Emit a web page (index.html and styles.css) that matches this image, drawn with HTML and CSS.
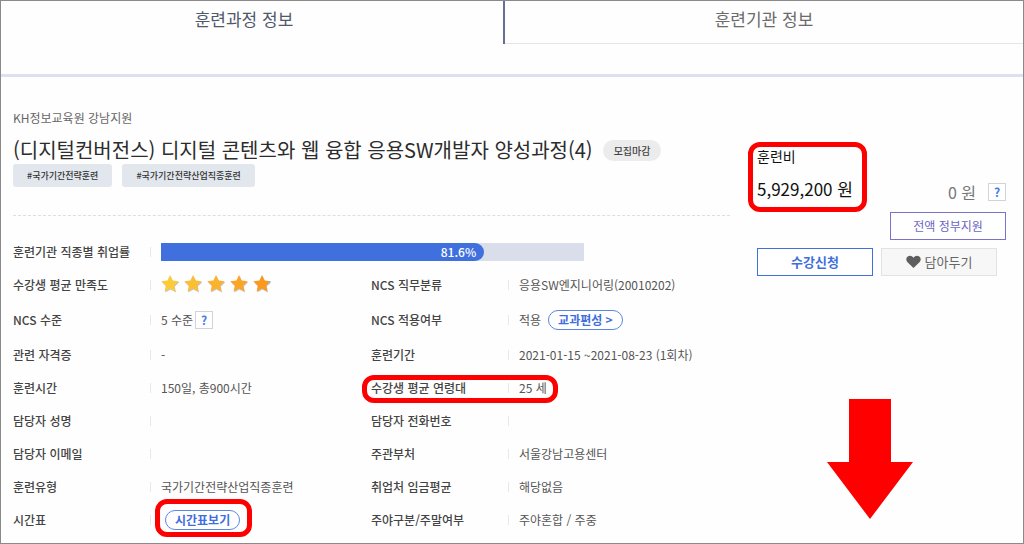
FILE: index.html
```html
<!DOCTYPE html>
<html lang="ko">
<head>
<meta charset="utf-8">
<title>훈련과정 정보</title>
<link rel="stylesheet" href="styles.css">
</head>
<body>
<div class="page">
  <nav class="tabs">
    <a class="tab tab-active" href="#course">훈련과정 정보</a>
    <a class="tab" href="#institute">훈련기관 정보</a>
  </nav>
  <div class="content">
    <main class="course" id="course">
      <p class="institute">KH정보교육원 강남지원</p>
      <div class="title-row">
        <h1 class="title">(디지털컨버전스) 디지털 콘텐츠와 웹 융합 응용SW개발자 양성과정(4)</h1>
        <span class="status">모집마감</span>
      </div>
      <div class="tags">
        <span class="tag">#국가기간전략훈련</span>
        <span class="tag">#국가기간전략산업직종훈련</span>
      </div>
      <table class="info">
        <colgroup><col class="col-label"><col class="col-value"><col class="col-label"><col></colgroup>
        <tr>
          <th scope="row">훈련기관 직종별 취업률</th>
          <td colspan="3"><div class="bar"><div class="bar-fill" style="width:76.4%">81.6%</div></div></td>
        </tr>
        <tr>
          <th scope="row">수강생 평균 만족도</th>
          <td>
            <svg class="stars" viewBox="0 0 112 20" role="img" aria-label="별점">
              <defs>
                <path id="star" d="M9 1 L11.6 6.6 L17.7 7.3 L13.2 11.5 L14.4 17.5 L9 14.5 L3.6 17.5 L4.8 11.5 L.3 7.3 L6.4 6.6 Z"/>
              </defs>
              <g fill="#c4c4c4"><use href="#star" x="0.6" y="1"/><use href="#star" x="23.6" y="1"/><use href="#star" x="46.6" y="1"/><use href="#star" x="69.6" y="1"/><use href="#star" x="92.6" y="1"/></g>
              <use href="#star" fill="#fdcb38"/>
              <use href="#star" x="23" fill="#fcbf32"/>
              <use href="#star" x="46" fill="#fbb22c"/>
              <use href="#star" x="69" fill="#faa526"/>
              <use href="#star" x="92" fill="#fa991e"/>
              <path fill="#a9a9a9" d="M107 7 L109.7 7.3 L107 9.8 Z"/>
            </svg>
          </td>
          <th scope="row">NCS 직무분류</th>
          <td>응용SW엔지니어링(20010202)</td>
        </tr>
        <tr class="tall">
          <th scope="row">NCS 수준</th>
          <td><div class="inline-row">5 수준 <button class="help" type="button" aria-label="NCS 수준 도움말">?</button></div></td>
          <th scope="row">NCS 적용여부</th>
          <td><div class="inline-row wide">적용 <button class="pill" type="button">교과편성 &gt;</button></div></td>
        </tr>
        <tr>
          <th scope="row">관련 자격증</th><td>-</td>
          <th scope="row">훈련기간</th><td>2021-01-15 ~2021-08-23 (1회차)</td>
        </tr>
        <tr>
          <th scope="row">훈련시간</th><td>150일, 총900시간</td>
          <th scope="row" class="mark mark-age">수강생 평균 연령대</th><td>25 세</td>
        </tr>
        <tr>
          <th scope="row">담당자 성명</th><td></td>
          <th scope="row">담당자 전화번호</th><td></td>
        </tr>
        <tr>
          <th scope="row">담당자 이메일</th><td></td>
          <th scope="row">주관부처</th><td>서울강남고용센터</td>
        </tr>
        <tr>
          <th scope="row">훈련유형</th><td>국가기간전략산업직종훈련</td>
          <th scope="row">취업처 임금평균</th><td>해당없음</td>
        </tr>
        <tr>
          <th scope="row">시간표</th>
          <td><div class="timetable"><span class="mark mark-time"><button class="pill" type="button">시간표보기</button></span></div></td>
          <th scope="row">주야구분/주말여부</th><td>주야혼합 / 주중</td>
        </tr>
      </table>
    </main>
    <aside class="cost">
      <div class="cost-row">
        <div class="fee mark mark-fee">
          <p class="fee-label">훈련비</p>
          <p class="fee-value">5,929,200 원</p>
        </div>
        <div class="own">
          <span>0 원</span>
          <button class="help" type="button" aria-label="자부담 도움말">?</button>
        </div>
      </div>
      <button class="btn btn-support" type="button">전액 정부지원</button>
      <div class="actions">
        <button class="btn btn-apply" type="button">수강신청</button>
        <button class="btn btn-keep" type="button">
          <svg class="heart" viewBox="0 0 16 14" aria-hidden="true"><path d="M8 13.5 L1.4 7 C-.3 5 .1 2.2 1.9 1 C3.9 -.4 6.6 .2 8 2.4 C9.4 .2 12.1 -.4 14.1 1 C15.9 2.2 16.3 5 14.6 7 Z"/></svg>
          담아두기
        </button>
      </div>
      <svg class="arrow" viewBox="0 0 86 120" aria-hidden="true"><path d="M22 0 H64 V63 H86 L43 120 L0 63 H22 Z"/></svg>
    </aside>
  </div>
</div>
</body>
</html>
```
FILE: styles.css
```css
* { box-sizing: border-box; }

body {
  margin: 0;
  background: #fff;
  color: #555;
  font: 12px/20px "Noto Sans CJK KR", sans-serif;
}

p, h1 { margin: 0; }

button {
  font: inherit;
  padding: 0;
  cursor: pointer;
}

.page {
  min-height: 100vh;
  border: 1px solid #8a8a8a;
  background: #fefefe;
}

/* tabs */
.tabs {
  display: flex;
  height: 76px;
  border-bottom: 3px solid #dce1ec;
}

.tab {
  flex: 1;
  height: 43px;
  border-bottom: 1px solid #e4e6e8;
  color: #6b6b6b;
  font-size: 17px;
  line-height: 36px;
  text-align: center;
  text-decoration: none;
}

.tab-active {
  flex: 0 0 504px;
  padding-right: 16px;
  border-bottom: 0;
  border-right: 2px solid #646f92;
  color: #50586b;
}

.content {
  display: flex;
  gap: 27px;
  padding: 31px 17px 6px 12px;
}

/* course heading */
.course {
  flex: 1;
  min-width: 0;
}

.institute { color: #666; }

.title-row {
  display: flex;
  align-items: center;
  gap: 10px;
  margin-top: 8px;
}

.title {
  color: #2c2c2c;
  font-size: 20px;
  font-weight: 400;
  line-height: 28px;
  white-space: nowrap;
}

.status {
  padding: 0 11px;
  border-radius: 11px;
  background: #ececec;
  color: #444;
  font-size: 10px;
  font-weight: 500;
  line-height: 21px;
  white-space: nowrap;
}

.tags {
  display: flex;
  gap: 10px;
  padding-bottom: 28px;
  border-bottom: 1px dashed #dedede;
}

.tag {
  padding: 0 14px;
  border-radius: 3px;
  background: #e2e7ee;
  color: #333;
  font-size: 9px;
  font-weight: 500;
  line-height: 23px;
}

/* course details */
.info {
  width: 100%;
  margin-top: 19px;
  border-collapse: collapse;
  table-layout: fixed;
}

.col-label { width: 137px; }
.col-value { width: 221px; }

.info tr { height: 33px; }
.info .tall { height: 37px; }

.info th,
.info td {
  padding: 0;
  text-align: left;
  vertical-align: middle;
  white-space: nowrap;
}

.info th {
  color: #444;
  font-weight: 500;
}

.info td {
  padding-left: 11px;
  background: linear-gradient(#e3eaec, #e3eaec) 0 50% / 1px 10px no-repeat;
}

.bar {
  max-width: 423px;
  height: 18px;
  background: #d9deea;
}

.bar-fill {
  height: 18px;
  padding-right: 8px;
  border-radius: 0 9px 9px 0;
  background: #4070de;
  color: #fff;
  font-weight: 500;
  line-height: 18px;
  text-align: right;
}

.stars {
  display: block;
  width: 112px;
  height: 20px;
  margin-bottom: 2px;
}

.inline-row {
  display: flex;
  align-items: center;
  gap: 2px;
}

.inline-row.wide { gap: 7px; }

.timetable {
  display: flex;
  padding-left: 4px;
}

.help {
  width: 18px;
  height: 18px;
  border: 1px solid #cfd3da;
  background: #fff;
  color: #4a7be6;
  font-weight: 700;
  line-height: 16px;
}

.pill {
  display: block;
  padding: 0 9px;
  border: 1px solid #5c86e4;
  border-radius: 10px;
  background: #fff;
  color: #3f6fdc;
  font-weight: 700;
  line-height: 18px;
}

/* cost panel */
.cost {
  display: flex;
  flex: 0 0 249px;
  flex-direction: column;
  padding-top: 38px;
}

.cost-row {
  display: flex;
  align-items: flex-end;
  justify-content: space-between;
}

.fee { color: #111; }
.fee-label { font-size: 14px; }

.fee-value {
  margin-top: 11px;
  font-size: 17px;
  line-height: 24px;
}

.own {
  display: flex;
  align-items: center;
  gap: 12px;
  color: #777;
  font-size: 16px;
  line-height: 18px;
}

.own .help { font-size: 12px; }

.btn {
  width: 116px;
  height: 28px;
  border: 1px solid;
  background: #fff;
}

.btn-support {
  align-self: flex-end;
  margin-top: 11px;
  border-color: #7a73c8;
  color: #6c66c4;
}

.actions {
  display: flex;
  gap: 8px;
  margin-top: 8px;
}

.btn-apply {
  border-color: #4070de;
  color: #3f6fdc;
  font-size: 13px;
  font-weight: 700;
}

.btn-keep {
  display: flex;
  align-items: center;
  justify-content: center;
  gap: 4px;
  border-color: #e2e2e2;
  background: #f7f7f7;
  color: #666;
  font-size: 13px;
}

.heart {
  width: 15px;
  height: 14px;
  fill: #5e5e5e;
}

.arrow {
  width: 86px;
  height: 120px;
  margin: 123px 0 0 70px;
  fill: #fe0000;
}

/* red highlight frames laid over the details */
.mark { position: relative; }

.mark::after {
  content: "";
  position: absolute;
  border: 5px solid #fe0000;
  border-radius: 12px;
  pointer-events: none;
}

.mark-fee::after { inset: -4px -14px -11px -9px; }
.mark-age::after { inset: 4px -50px 1px -9px; }
.mark-time::after { inset: -11px -12px -7px -10px; }
```
